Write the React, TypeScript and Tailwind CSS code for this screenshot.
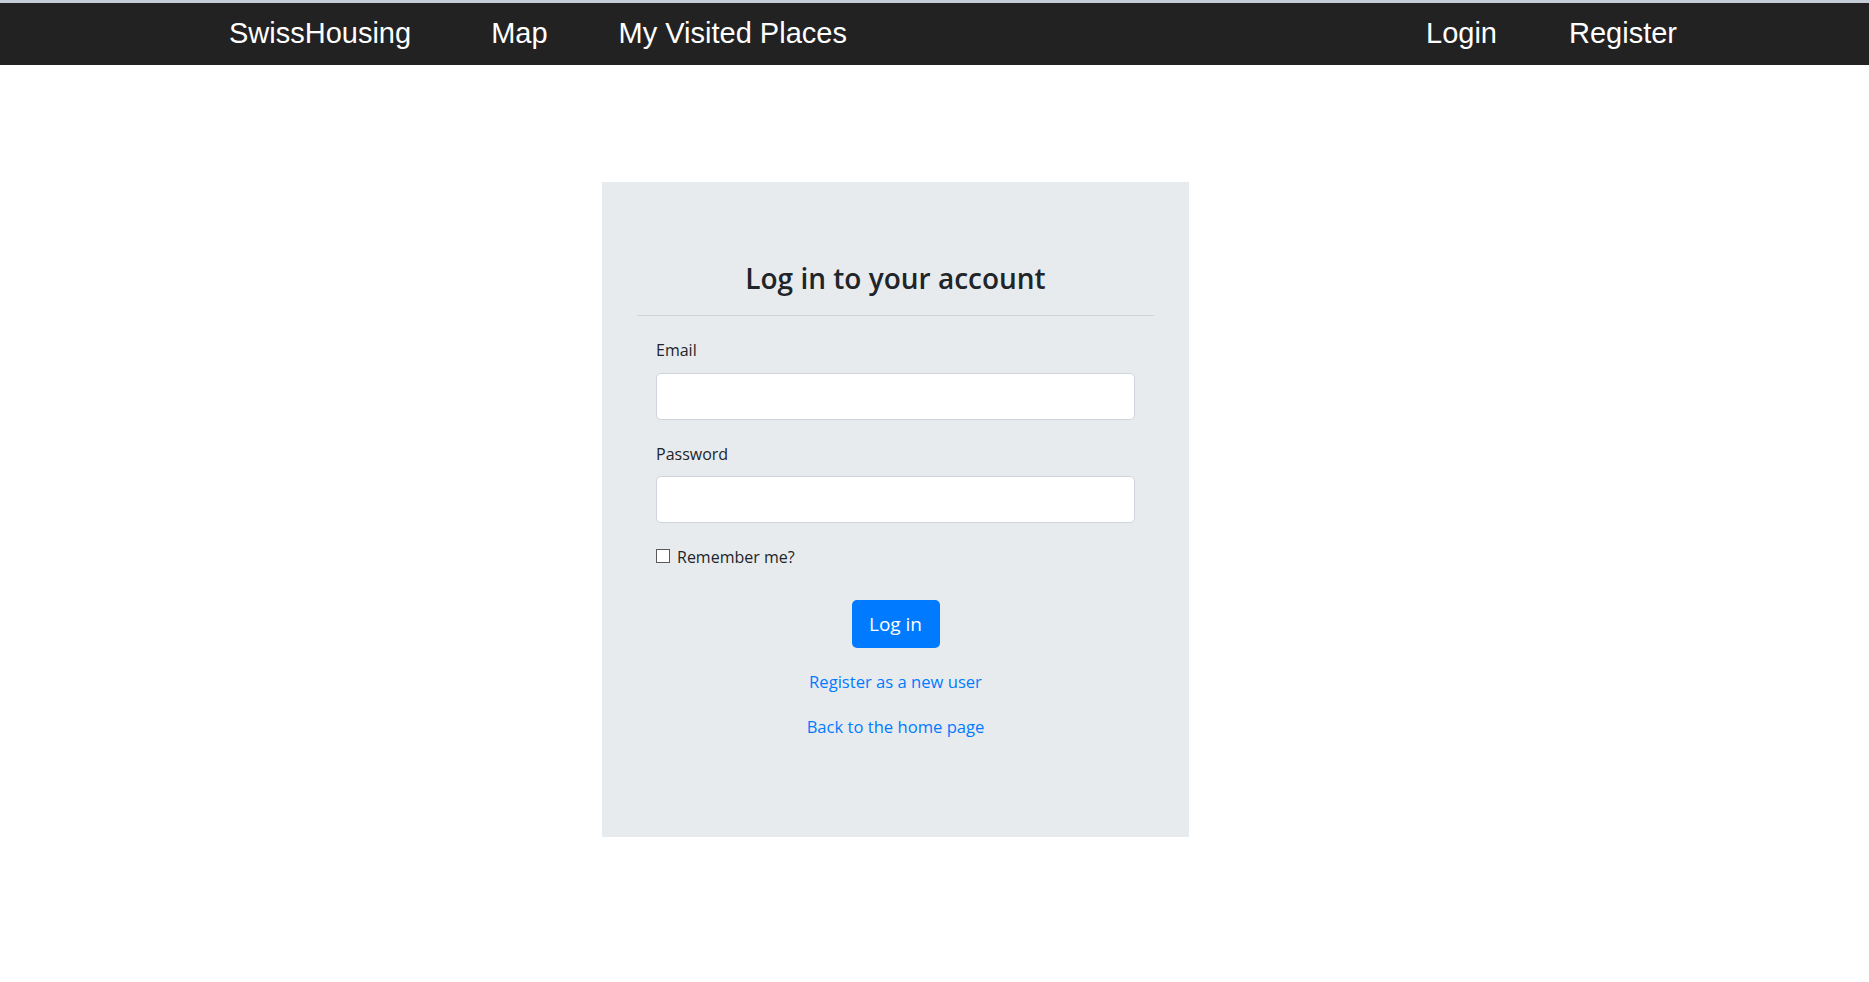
import { useState } from "react";

function App() {
  const [email, setEmail] = useState<string>("");
  const [password, setPassword] = useState<string>("");
  const [remember, setRemember] = useState<boolean>(false);

  return (
    <div className="min-h-screen bg-white font-['Open_Sans',sans-serif] text-[#212529]">
      {/* Navbar */}
      <nav className="border-t-[3px] border-[#c5ced6] bg-[#222222] h-[65px] flex items-center font-['Liberation_Sans',Arial,sans-serif] text-white text-[29px]">
        <div className="flex items-center pl-[229px] w-full">
          <a href="#" className="mr-[80px]">SwissHousing</a>
          <a href="#" className="mr-[71px]">Map</a>
          <a href="#">My Visited Places</a>
          <div className="ml-auto flex items-center pr-[192px]">
            <a href="#" className="mr-[72px]">Login</a>
            <a href="#">Register</a>
          </div>
        </div>
      </nav>

      {/* Login card */}
      <div className="pl-[602px] pt-[117px]">
        <div className="w-[587px] h-[655px] bg-[#e8ebee] px-[35px] pt-[78px]">
          <h4 className="text-center text-[28px] leading-[36px] font-semibold">
            Log in to your account
          </h4>
          <hr className="mt-[19px] border-t border-[#d2d5d8]" />

          <form
            className="px-[19px] pt-[20px]"
            onSubmit={(e) => e.preventDefault()}
          >
            <div className="mb-[20px]">
              <label className="block text-[16px] leading-[28px] mb-[9px]">Email</label>
              <input
                type="email"
                value={email}
                onChange={(e) => setEmail(e.target.value)}
                className="block w-[479px] h-[47px] bg-white border border-[#ced4da] rounded-[5px] px-3 outline-none"
              />
            </div>
            <div className="mb-[20px]">
              <label className="block text-[16px] leading-[28px] mb-[8px]">Password</label>
              <input
                type="password"
                value={password}
                onChange={(e) => setPassword(e.target.value)}
                className="block w-[479px] h-[47px] bg-white border border-[#ced4da] rounded-[5px] px-3 outline-none"
              />
            </div>
            <label className="flex items-center h-[28px] text-[16px]">
              <input
                type="checkbox"
                checked={remember}
                onChange={(e) => setRemember(e.target.checked)}
                className="appearance-none w-[14px] h-[14px] border-[1.5px] border-[#5a5a5a] bg-white mr-[7px] -mt-[2px]"
              />
              Remember me?
            </label>

            <div className="flex flex-col items-center">
              <button
                type="submit"
                className="mt-[29px] w-[88px] h-[48px] bg-[#007bff] text-white text-[19px] rounded-[5px]"
              >
                Log in
              </button>
              <a href="#" className="mt-[20px] text-[16.6px] leading-[28px] text-[#007bff]">
                Register as a new user
              </a>
              <a href="#" className="mt-[17px] text-[16.6px] leading-[28px] text-[#007bff]">
                Back to the home page
              </a>
            </div>
          </form>
        </div>
      </div>
    </div>
  );
}

export default App;
